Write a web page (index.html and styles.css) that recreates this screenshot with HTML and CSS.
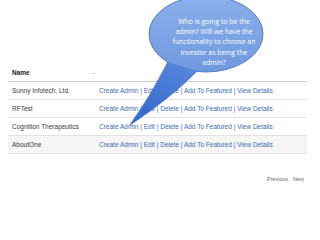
FILE: index.html
```html
<!DOCTYPE html>
<html>
<head>
<meta charset="utf-8">
<link rel="stylesheet" href="styles.css">
</head>
<body>
<div class="page">
  <div class="table">
    <div class="row head">
      <div class="c1">Name <span class="sort">-</span></div>
      <div class="c2"></div>
    </div>
    <div class="row">
      <div class="c1">Sunny Infotech, Ltd.</div>
      <div class="c2 links">Create Admin | Edit | Delete | Add To Featured | View Details</div>
    </div>
    <div class="row">
      <div class="c1">RFTest</div>
      <div class="c2 links">Create Admin | Edit | Delete | Add To Featured | View Details</div>
    </div>
    <div class="row">
      <div class="c1">Cognition Therapeutics</div>
      <div class="c2 links">Create Admin | Edit | Delete | Add To Featured | View Details</div>
    </div>
    <div class="row alt">
      <div class="c1">AboutOne</div>
      <div class="c2 links">Create Admin | Edit | Delete | Add To Featured | View Details</div>
    </div>
  </div>
  <div class="pager"><span>Previous</span><span>Next</span></div>
</div>

<svg class="bubble" width="320" height="240" viewBox="0 0 320 240">
  <defs>
    <linearGradient id="fillE" x1="0" y1="0" x2="0" y2="1">
      <stop offset="0" stop-color="#8bafeb"/>
      <stop offset="1" stop-color="#6f99de"/>
    </linearGradient>
    <linearGradient id="fillT" x1="1" y1="0" x2="0" y2="1">
      <stop offset="0" stop-color="#5a8ade"/>
      <stop offset="1" stop-color="#2f66cc"/>
    </linearGradient>
  </defs>
  <ellipse cx="206" cy="34" rx="57" ry="38" fill="url(#fillE)" stroke="#4f7ec9" stroke-width="1"/>
  <path d="M168 62 Q152 94 130 125 Q172 97 197 71 Z" fill="url(#fillT)"/>
  <path d="M168 62 Q152 94 130 125 Q172 97 197 71" fill="none" stroke="#3c6cc0" stroke-width="0.8"/>
</svg>
<div class="bubble-text">Who is going to be the<br>admin? Will we have the<br>functionality to choose an<br>investor as being the<br>admin?</div>
</body>
</html>
```
FILE: styles.css
```css
html, body {
  margin: 0;
  padding: 0;
  background: #ffffff;
}
body {
  width: 320px;
  height: 240px;
  overflow: hidden;
  position: relative;
  font-family: "Liberation Sans", Arial, sans-serif;
}
.page {
  padding: 64px 13px 0 8px;
}
.table {
  display: flex;
  flex-direction: column;
}
.row {
  display: flex;
  align-items: center;
  height: 17px;
  border-bottom: 1px solid #e2e2e2;
  font-size: 6.5px;
  color: #3a3a3a;
}
.row.head {
  border-bottom: 1px solid #cfcfcf;
  font-weight: bold;
  color: #222222;
}
.row.alt {
  background: #f5f5f5;
}
.c1 {
  width: 87px;
  padding-left: 4px;
  white-space: nowrap;
}
.sort {
  font-weight: normal;
  color: #777;
  padding-left: 61px;
}
.c2 {
  flex: 1;
  white-space: nowrap;
}
.links {
  color: #3b6db4;
}
.pager {
  display: flex;
  justify-content: flex-end;
  gap: 5px;
  margin-top: 22px;
  padding-right: 3px;
  font-size: 5.4px;
  color: #666666;
}
.bubble {
  position: absolute;
  left: 0;
  top: 0;
  pointer-events: none;
}
.bubble-text {
  position: absolute;
  left: 164px;
  top: 17px;
  width: 100px;
  text-align: center;
  font-family: "Open Sans", sans-serif;
  font-size: 6.9px;
  line-height: 10.2px;
  color: #ffffff;
}
```
